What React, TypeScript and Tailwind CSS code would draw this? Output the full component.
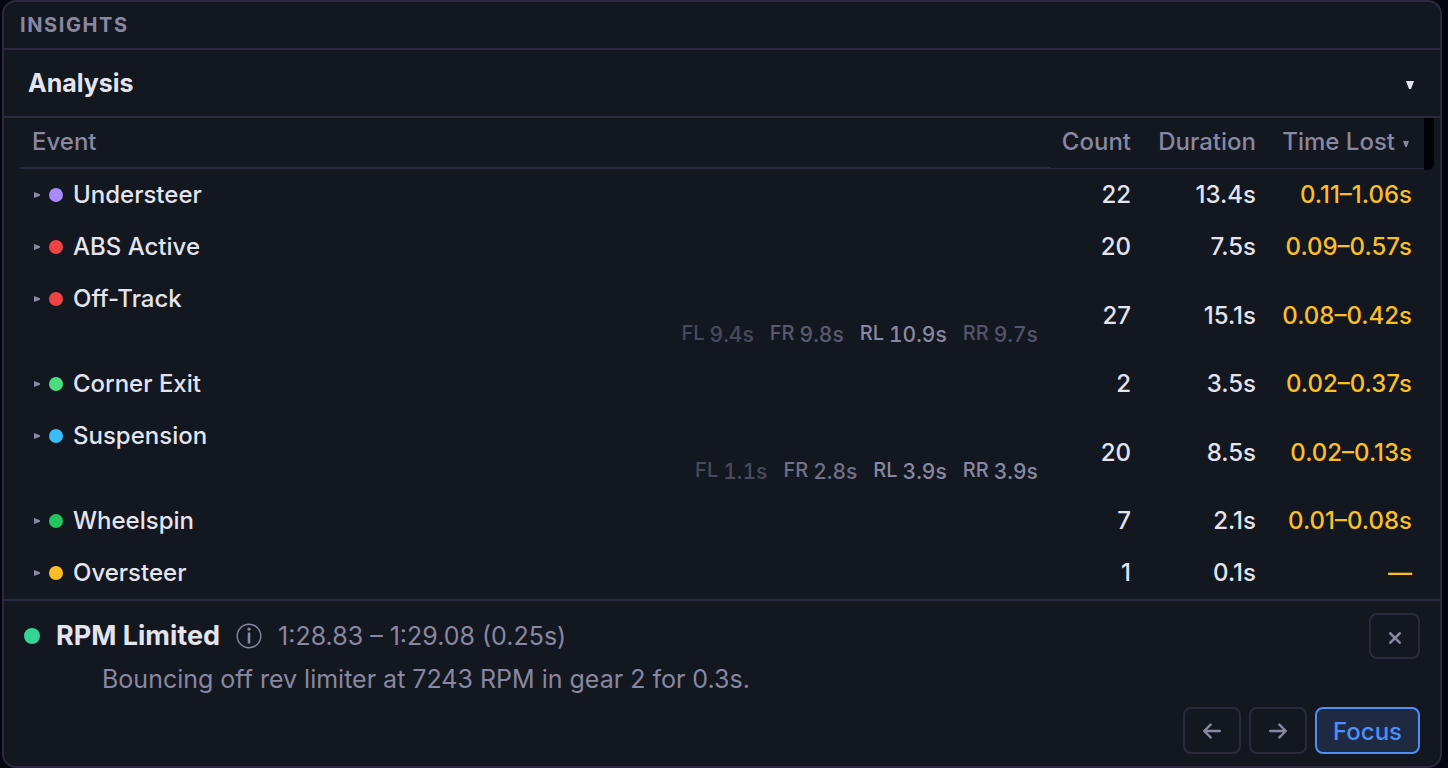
import React from 'react';

interface WheelTime {
  wheel: string;
  time: string;
  tone: string;
}

interface EventRow {
  name: string;
  dot: string;
  count: number;
  duration: string;
  timeLost: string;
  wheels?: WheelTime[];
}

const rows: EventRow[] = [
  { name: 'Understeer', dot: 'bg-[#a78bfa]', count: 22, duration: '13.4s', timeLost: '0.11–1.06s' },
  { name: 'ABS Active', dot: 'bg-[#ef4444]', count: 20, duration: '7.5s', timeLost: '0.09–0.57s' },
  {
    name: 'Off-Track',
    dot: 'bg-[#ef4444]',
    count: 27,
    duration: '15.1s',
    timeLost: '0.08–0.42s',
    wheels: [
      { wheel: 'FL', time: '9.4s', tone: 'opacity-45' },
      { wheel: 'FR', time: '9.8s', tone: 'opacity-60' },
      { wheel: 'RL', time: '10.9s', tone: 'opacity-100' },
      { wheel: 'RR', time: '9.7s', tone: 'opacity-55' },
    ],
  },
  { name: 'Corner Exit', dot: 'bg-[#4ade80]', count: 2, duration: '3.5s', timeLost: '0.02–0.37s' },
  {
    name: 'Suspension',
    dot: 'bg-[#38bdf8]',
    count: 20,
    duration: '8.5s',
    timeLost: '0.02–0.13s',
    wheels: [
      { wheel: 'FL', time: '1.1s', tone: 'opacity-45' },
      { wheel: 'FR', time: '2.8s', tone: 'opacity-80' },
      { wheel: 'RL', time: '3.9s', tone: 'opacity-100' },
      { wheel: 'RR', time: '3.9s', tone: 'opacity-100' },
    ],
  },
  { name: 'Wheelspin', dot: 'bg-[#22c55e]', count: 7, duration: '2.1s', timeLost: '0.01–0.08s' },
  { name: 'Oversteer', dot: 'bg-[#fbbf24]', count: 1, duration: '0.1s', timeLost: '—' },
];

const CaretDown: React.FC<{ className: string }> = ({ className }) => (
  <svg viewBox="0 0 8 8" className={className} fill="currentColor" aria-hidden="true">
    <path d="M0 0h8L5 8H3z" />
  </svg>
);

const CaretRight: React.FC = () => (
  <svg viewBox="0 0 6 6" className="size-1.5 text-[#8888a0]" fill="currentColor" aria-hidden="true">
    <path d="M0 0L6 2.3v1.4L0 6z" />
  </svg>
);

const WheelBreakdown: React.FC<{ wheels: WheelTime[] }> = ({ wheels }) => (
  <div className="flex justify-end gap-4 text-[#8888a0]">
    {wheels.map((w) => (
      <span key={w.wheel} className={`flex gap-[5px] ${w.tone}`}>
        <span className="text-[20px] font-medium leading-[32px]">{w.wheel}</span>
        <span className="pt-[3px] text-[21px] leading-[30px] tabular-nums">{w.time}</span>
      </span>
    ))}
  </div>
);

const EventTable: React.FC = () => (
  <table className="w-full border-separate border-spacing-0">
    <thead>
      <tr className="align-top text-[#8888a0]">
        <th className="border-b-2 border-[#2a2a3c] px-3 pb-[7px] pt-1.5 text-left font-medium">Event</th>
        <th className="w-[93px] border-b border-[#2a2a3c] px-3 pt-1.5 text-right font-medium">Count</th>
        <th className="w-[125px] border-b border-[#2a2a3c] px-3 pt-1.5 text-right font-medium">Duration</th>
        <th className="w-[156px] border-b border-[#2a2a3c] px-3 pt-1.5 text-right font-medium" aria-sort="descending">
          <button type="button" className="inline-flex items-center gap-2 whitespace-nowrap pr-[3px] align-top">
            Time Lost
            <CaretDown className="mt-1 size-1.5" />
          </button>
        </th>
      </tr>
    </thead>
    <tbody className="font-medium">
      {rows.map((row) => (
        <tr key={row.name}>
          <td className="px-3 py-2">
            <div className="flex items-center pl-0.5">
              <CaretRight />
              <span className={`ml-[9px] mr-2.5 size-3.5 rounded-full ${row.dot}`} />
              {row.name}
            </div>
            {row.wheels && <WheelBreakdown wheels={row.wheels} />}
          </td>
          <td className="px-3 py-2 text-right">{row.count}</td>
          <td className="px-3 py-2 text-right">{row.duration}</td>
          <td className="whitespace-nowrap px-3 py-2 text-right text-[#fbbf24]">{row.timeLost}</td>
        </tr>
      ))}
    </tbody>
  </table>
);

const EventDetail: React.FC = () => (
  <section className="border-t-2 border-[#2a2a3c] px-5 py-3">
    <div className="flex items-center text-[#8888a0]">
      <span className="size-4 rounded-full bg-[#34d399]" />
      <h3 className="ml-4 text-[27px] font-bold text-[#e4e4ef]">RPM Limited</h3>
      <svg viewBox="0 0 26 26" className="ml-4 size-[26px]" fill="none" stroke="currentColor" aria-hidden="true">
        <circle cx="13" cy="13" r="11.8" strokeWidth="1.4" />
        <path d="M13 9.5v11" strokeWidth="2.6" />
        <circle cx="13" cy="6.2" r="1.6" fill="currentColor" stroke="none" />
      </svg>
      <span className="ml-4 text-[25px]">1:28.83 – 1:29.08 (0.25s)</span>
      <button
        type="button"
        aria-label="Close"
        className="ml-auto flex h-[46px] w-[51px] items-center justify-center rounded-lg border-2 border-[#2a2a3c]"
      >
        <svg viewBox="0 0 12 12" className="mt-1 size-3" stroke="currentColor" strokeWidth="2.6" strokeLinecap="round" aria-hidden="true">
          <path d="M1.3 1.3l9.4 9.4M10.7 1.3L1.3 10.7" />
        </svg>
      </button>
    </div>
    <p className="mt-0.5 pl-[78px] text-[25px] text-[#8888a0]">Bouncing off rev limiter at 7243 RPM in gear 2 for 0.3s.</p>
    <div className="mt-2.5 flex justify-end gap-2 text-[#8888a0]">
      <button
        type="button"
        aria-label="Previous"
        className="flex h-[47px] w-[58px] items-center justify-center rounded-lg border-2 border-[#2a2a3c]"
      >
        <svg viewBox="0 0 18 16" className="h-4 w-[18px]" fill="none" stroke="currentColor" strokeWidth="2.4" strokeLinecap="round" strokeLinejoin="round" aria-hidden="true">
          <path d="M16.8 8H1.2M7.6 1.6L1.2 8l6.4 6.4" />
        </svg>
      </button>
      <button
        type="button"
        aria-label="Next"
        className="flex h-[47px] w-[58px] items-center justify-center rounded-lg border-2 border-[#2a2a3c]"
      >
        <svg viewBox="0 0 18 16" className="h-4 w-[18px]" fill="none" stroke="currentColor" strokeWidth="2.4" strokeLinecap="round" strokeLinejoin="round" aria-hidden="true">
          <path d="M1.2 8h15.6M10.4 1.6L16.8 8l-6.4 6.4" />
        </svg>
      </button>
      <button
        type="button"
        className="flex h-[47px] items-center rounded-lg border-2 border-[#4f8ff7] bg-[#1e2a42] px-4 pt-0.5 font-medium text-[#4f8ff7]"
      >
        Focus
      </button>
    </div>
  </section>
);

export default function App() {
  return (
    <div className="flex min-h-screen bg-[#05060f] pl-0.5 pr-1.5 font-['Inter',sans-serif] text-[24px] leading-[36px] text-[#e4e4ef]">
      <main className="flex flex-1 flex-col rounded-[14px] border-2 border-[#2a2a3c] bg-[#131720]">
        <header className="border-b-2 border-[#2a2a3c] px-4 py-1.5">
          <h1 className="text-[20px] font-bold leading-[34px] tracking-[0.08em] text-[#8888a0]">INSIGHTS</h1>
        </header>
        <button type="button" className="flex items-center justify-between border-b-2 border-[#2a2a3c] px-6 py-[15px]">
          <span className="text-[25px] font-bold">Analysis</span>
          <CaretDown className="mr-0.5 mt-1 size-2" />
        </button>
        <div className="flex flex-1 pl-4 pr-1.5">
          <div className="flex-1">
            <EventTable />
          </div>
          <div className="h-[52px] w-2.5 rounded-br-md bg-[#020307]" />
        </div>
        <EventDetail />
      </main>
    </div>
  );
}
